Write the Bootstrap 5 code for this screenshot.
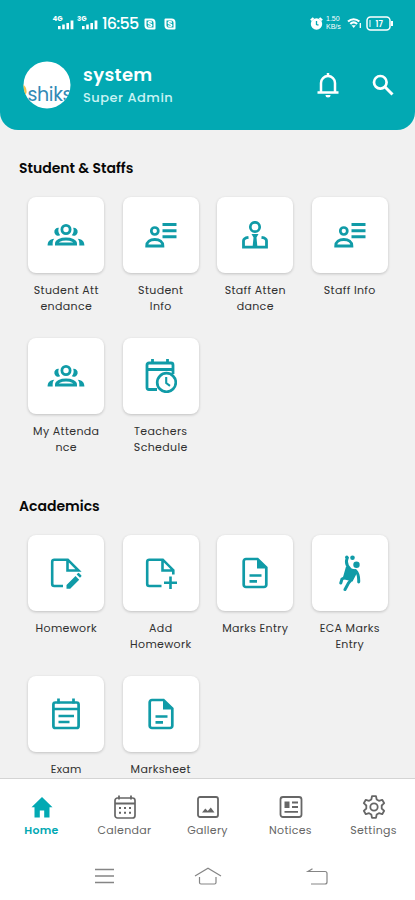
<!DOCTYPE html>
<html lang="en">
<head>
<meta charset="utf-8">
<meta name="viewport" content="width=device-width, initial-scale=1">
<title>School dashboard</title>
<link href="https://cdn.jsdelivr.net/npm/bootstrap@5.3.0/dist/css/bootstrap.min.css" rel="stylesheet">
<style>
:root { --teal: #02a9b3; --icon: #109ba7; }
body { font-family: Poppins, Inter, "Liberation Sans", sans-serif; font-feature-settings: "cv11"; background: #f1f1f1; }
svg { display: block; fill: none; stroke: currentColor; overflow: visible; flex-shrink: 0; }
svg .solid { fill: currentColor; stroke: none; }
.app { width: 415px; height: 900px; }
.app-head { height: 130px; background: var(--teal); border-radius: 0 0 18px 18px; }
.status { height: 46px; padding: 14px 22px 0 53px; }
.clock { font-size: 16px; line-height: 20px; font-weight: 500; letter-spacing: -.75px; margin-left: 3px; width: 38px; }
.status-right { padding-top: 1px; gap: 4px; }
.rate { font-family: "Liberation Sans", sans-serif; font-size: 7px; line-height: 8px; width: 17px; margin-left: -1px; }
.profile { padding: 15px 21px 0 23px; }
.avatar { width: 48px; height: 48px; }
.who { margin-left: 12px; }
.who-name { font-size: 18px; line-height: 24px; font-weight: 600; letter-spacing: .35px; }
.who-role { font-size: 13px; line-height: 20px; font-weight: 500; color: #c9f3f4; letter-spacing: .5px; margin-top: 1px; }
.search { margin-left: 33px; }
.content { padding: 0 18px 0 19px; }
.first-section { padding-top: 28px; }
.next-section { padding-top: 18px; }
.section-title { font-size: 14px; line-height: 20px; font-weight: 600; color: #080808; letter-spacing: 0; }
.tiles { padding: 19px 0 0; }
.tile { height: 140.7px; }
.tile-box { width: 76px; height: 76px; border-radius: 8px; color: var(--icon); box-shadow: 0 1px 3px rgba(0,0,0,.2); }
.tile-label { font-size: 11px; line-height: 16px; margin-top: 9px; color: #303030; letter-spacing: .35px; white-space: nowrap; }
.tabs { height: 74px; border-top: 1px solid #d4d4d4; color: #666; padding-top: 16px; }
.tab-label { font-size: 11px; line-height: 16px; margin-top: 3px; letter-spacing: .3px; }
.tab-on { color: var(--teal); }
.tab-on .tab-label { font-weight: 600; }
.sysbar { height: 48px; color: #858585; padding: 0 87px 0 95px; }
.sys-home { margin-right: 5px; }
</style>
</head>
<body>
<svg width="0" height="0" class="position-absolute">
  <defs>
    <symbol id="group" viewBox="0 0 38 24">
      <circle cx="19" cy="6.500" r="4.100" stroke-width="2.800"/>
      <path d="M9.500 21v-.3c0-2.700 4.200-4.700 9.500-4.700s9.500 2 9.500 4.700v.3z" stroke-width="3"/>
      <path class="solid" d="M11.800 4.800a8 8 0 0 0 1.400 7.500 4 4 0 1 1-1.400-7.500zM26.200 4.800a8 8 0 0 1-1.400 7.500 4 4 0 1 0 1.400-7.500zM7.200 15.800c-1.300 1.500-1.700 3.200-1.500 6.700H.6c0-3.600 1.900-6.300 6.600-6.700zM30.800 15.800c1.300 1.500 1.700 3.200 1.500 6.700h5.100c0-3.600-1.900-6.300-6.600-6.700z"/>
    </symbol>
    <symbol id="info" viewBox="0 0 32 26">
      <circle cx="9.800" cy="9" r="3.500" stroke-width="2.700"/>
      <path d="M1.700 24c0-4.200 3.300-6.500 8.100-6.500s8.100 2.300 8.100 6.500z" stroke-width="2.800"/>
      <path d="M17.500 2.500h14M17.500 8.700h14M17.500 14.800h14" stroke-width="2.900"/>
    </symbol>
    <symbol id="staff" viewBox="0 0 26 28">
      <circle cx="13" cy="6" r="4.700" stroke-width="2.700"/>
      <path d="M6.500 16.300c-3 .4-5 1.600-5 3.500v6.400h23v-6.400c0-1.900-2-3.100-5-3.500" stroke-width="2.800"/>
      <path class="solid" d="M9.500 13h7l-2 3.500.8 8.500h-4.600l.8-8.500z"/>
    </symbol>
    <symbol id="sched" viewBox="0 0 32 34">
      <path d="M12 30.500H4a2 2 0 0 1-2-2V6a2 2 0 0 1 2-2h22a2 2 0 0 1 2 2v9M2 10.500h26M7.500 0v5M22.500 0v5" stroke-width="2.800"/>
      <circle cx="21.500" cy="23.500" r="9.300" stroke-width="2.700"/>
      <path d="M21.200 18v6l3.800 2.800" stroke-width="2.100"/>
    </symbol>
    <symbol id="edit" viewBox="0 0 32 32">
      <path d="M13 29H4.200a2 2 0 0 1-2-2V4.700a2 2 0 0 1 2-2h13.600L28.500 13.500h-11V3" stroke-width="2.600"/>
      <path class="solid" d="m16.500 28 9-9 3.700 3.700-9 9h-3.700zM26.600 17.400l1.200-1.200a1 1 0 0 1 1.400 0l2 2a1 1 0 0 1 0 1.400l-1.200 1.200z"/>
    </symbol>
    <symbol id="add" viewBox="0 0 32 32">
      <path d="M16.500 29H4.200a2 2 0 0 1-2-2V4.700a2 2 0 0 1 2-2h13.600L28.300 13.200v4.300M17.500 3v10.500h10.500M25.500 19.500v12.500M19 25.800h13" stroke-width="2.600"/>
    </symbol>
    <symbol id="doc" viewBox="0 0 26 32">
      <path d="M15.500 2H4a2.300 2.300 0 0 0-2.300 2.300v23.400A2.300 2.300 0 0 0 4 30h18a2.300 2.300 0 0 0 2.300-2.300V10.500zM7.500 18.500h12M7.500 24.300h7.500" stroke-width="2.700"/>
      <path class="solid" d="M15 2v9.500h9.500z"/>
    </symbol>
    <symbol id="exam" viewBox="0 0 28 32">
      <rect x="1.400" y="4.500" width="25.200" height="25.500" rx="2" stroke-width="2.700"/>
      <path d="M1.500 11h25M6.500.5v5M21.500.5v5M6.500 18h15.500M6.500 24h11" stroke-width="2.700"/>
    </symbol>
    <symbol id="sport" viewBox="0 0 22 36">
      <g class="solid"><circle cx="13.500" cy="2.800" r="2.300"/><circle cx="17.500" cy="9.800" r="3.200"/><circle cx="7.800" cy="2.300" r="1.700"/>
      <path d="m7 11.500 4 1.700 6 1.300 1 3.500-4.500 8.500-10-2.500z"/></g>
      <path d="M8.300 3C6.500 7 7.500 10.500 11 14M16.500 15.500c2.700 2.500 3.500 5 3.200 11.500M12.500 24.500l-3 3.500-3.500 6.500M7 22l-4 2-1.200 4" stroke-width="3" stroke-linecap="round" stroke-linejoin="round"/>
    </symbol>
    <symbol id="signal" viewBox="0 0 18 10">
      <path class="solid" d="M0 6.500h2.600V10H0zM4.200 5h2.600v5H4.200zM8.400 3.500H11V10H8.400zM12.600 1h2.800v9h-2.800z"/>
    </symbol>
    <symbol id="skype" viewBox="0 0 12 12">
      <path d="M1.500 1.500h6a3 3 0 0 1 3 3v6h-6a3 3 0 0 1-3-3z" stroke-width="2" stroke-linejoin="round"/>
      <path d="M8 4.300C6.500 3.300 4 3.700 4.300 5c.3 1.200 3.500.7 3.500 2.200 0 1.300-2.400 1.400-3.900.4" stroke-width="1.500"/>
    </symbol>
  </defs>
</svg>

<div class="app d-flex flex-column overflow-hidden">
  <header class="app-head flex-shrink-0 text-white">
    <div class="status d-flex align-items-start">
      <svg width="21" height="16" viewBox="0 0 21 16"><text class="solid" x="-.5" y="7" font-size="7" font-weight="700">4G</text><use href="#signal" x="5" y="5.500" width="18" height="10"/></svg>
      <svg width="21" height="16" viewBox="0 0 21 16" class="ms-1"><text class="solid" x="-1" y="7" font-size="7" font-weight="700">3G</text><use href="#signal" x="4" y="5.500" width="18" height="10"/></svg>
      <span class="clock">16:55</span>
      <svg width="12" height="12" class="ms-1 mt-1"><use href="#skype"/></svg>
      <svg width="12" height="12" class="ms-2 mt-1"><use href="#skype"/></svg>
      <div class="status-right d-flex align-items-center ms-auto">
        <svg width="13" height="13" viewBox="0 0 13 13"><circle cx="6.500" cy="7" r="5.700" class="solid"/><path d="M.8 3.300l2.700-2.300M12.200 3.300L9.500 1" stroke-width="2"/><path d="M6.500 4v3.500l2 .7" stroke="#02a9b3" stroke-width="1.300"/></svg>
        <div class="rate"><div>1.50</div><div>KB/s</div></div>
        <svg width="15" height="12" viewBox="0 0 15 12"><path d="M1 4.500c3.300-3 8-3 11.300 0M3.300 7c2-1.800 4.800-1.800 6.800 0" stroke-width="2.200"/><path class="solid" d="M4.500 8.300h4.400l-2.200 2.700z"/><path d="M13.300 6v5" stroke-width="1.300"/></svg>
        <svg width="27" height="15" viewBox="0 0 27 15"><rect x="1" y="1" width="23" height="13" rx="3.500" stroke-width="1.500"/><path d="M26 5v5" stroke-width="2"/><path d="M4 4v7" stroke-width="1"/><text class="solid" x="9.500" y="10.500" font-size="8" font-weight="600">17</text></svg>
      </div>
    </div>
    <div class="profile d-flex align-items-center">
      <svg class="avatar" viewBox="0 0 48 48"><clipPath id="disc"><circle cx="24" cy="24" r="23.500"/></clipPath><circle cx="24" cy="24" r="23.500" fill="#fff" stroke="none"/><g clip-path="url(#disc)"><path d="M0 23q5 5 3 10l-3 1z" fill="#f3c34e" stroke="none"/><text x="4.500" y="39.500" font-size="19" textLength="45" fill="#3189b5" stroke="none">shiks</text></g></svg>
      <div class="who">
        <div class="who-name">system</div>
        <div class="who-role">Super Admin</div>
      </div>
      <svg width="22" height="26" viewBox="0 0 22 26" class="ms-auto"><path d="M4 20.500V11a7 7 0 0 1 14 0v9.500M.5 20.500h21M11 1v3" stroke-width="2.500"/><path class="solid" d="M8.500 23h5a2.500 2.500 0 0 1-5 0z"/></svg>
      <svg width="22" height="22" viewBox="0 0 22 22" class="search"><circle cx="8.300" cy="8.300" r="6.300" stroke-width="2.700"/><path d="m12.800 12.800 7.700 7.700" stroke-width="3"/></svg>
    </div>
  </header>

  <main class="content flex-grow-1 overflow-hidden">
    <section class="first-section">
      <h2 class="section-title mb-0">Student &amp; Staffs</h2>
      <div class="tiles row row-cols-4 g-0 text-center">
        <div class="tile col"><div class="tile-box bg-white mx-auto d-flex align-items-center justify-content-center"><svg width="38" height="24"><use href="#group"/></svg></div><div class="tile-label">Student Att<br>endance</div></div>
        <div class="tile col"><div class="tile-box bg-white mx-auto d-flex align-items-center justify-content-center"><svg width="32" height="26"><use href="#info"/></svg></div><div class="tile-label">Student<br>Info</div></div>
        <div class="tile col"><div class="tile-box bg-white mx-auto d-flex align-items-center justify-content-center"><svg width="26" height="28"><use href="#staff"/></svg></div><div class="tile-label">Staff Atten<br>dance</div></div>
        <div class="tile col"><div class="tile-box bg-white mx-auto d-flex align-items-center justify-content-center"><svg width="32" height="26"><use href="#info"/></svg></div><div class="tile-label">Staff Info</div></div>
        <div class="tile col"><div class="tile-box bg-white mx-auto d-flex align-items-center justify-content-center"><svg width="38" height="24"><use href="#group"/></svg></div><div class="tile-label">My Attenda<br>nce</div></div>
        <div class="tile col"><div class="tile-box bg-white mx-auto d-flex align-items-center justify-content-center"><svg width="32" height="34"><use href="#sched"/></svg></div><div class="tile-label">Teachers<br>Schedule</div></div>
      </div>
    </section>
    <section class="next-section">
      <h2 class="section-title mb-0">Academics</h2>
      <div class="tiles row row-cols-4 g-0 text-center">
        <div class="tile col"><div class="tile-box bg-white mx-auto d-flex align-items-center justify-content-center"><svg width="32" height="32"><use href="#edit"/></svg></div><div class="tile-label">Homework</div></div>
        <div class="tile col"><div class="tile-box bg-white mx-auto d-flex align-items-center justify-content-center"><svg width="32" height="32"><use href="#add"/></svg></div><div class="tile-label">Add<br>Homework</div></div>
        <div class="tile col"><div class="tile-box bg-white mx-auto d-flex align-items-center justify-content-center"><svg width="26" height="32"><use href="#doc"/></svg></div><div class="tile-label">Marks Entry</div></div>
        <div class="tile col"><div class="tile-box bg-white mx-auto d-flex align-items-center justify-content-center"><svg width="22" height="36"><use href="#sport"/></svg></div><div class="tile-label">ECA Marks<br>Entry</div></div>
        <div class="tile col"><div class="tile-box bg-white mx-auto d-flex align-items-center justify-content-center"><svg width="28" height="32"><use href="#exam"/></svg></div><div class="tile-label">Exam</div></div>
        <div class="tile col"><div class="tile-box bg-white mx-auto d-flex align-items-center justify-content-center"><svg width="26" height="32"><use href="#doc"/></svg></div><div class="tile-label">Marksheet</div></div>
      </div>
    </section>
  </main>

  <nav class="tabs d-flex bg-white flex-shrink-0 text-center">
    <div class="col tab-on d-flex flex-column align-items-center"><svg width="24" height="24" viewBox="0 0 24 24"><path class="solid" d="M12 2 1.500 12.300h3v10.200h5.300V15.500h4.400v7h5.300V12.300h3z"/></svg><div class="tab-label">Home</div></div>
    <div class="col d-flex flex-column align-items-center"><svg width="24" height="24" viewBox="0 0 24 24"><rect x="2" y="3" width="20" height="20" rx="2.500" stroke-width="1.700"/><path d="M2 8.500h20M6 .5v4M18 .5v4" stroke-width="1.800"/><path d="M6 13h12.500M6 17.800h12.500" stroke-width="2" stroke-dasharray="2 3"/></svg><div class="tab-label">Calendar</div></div>
    <div class="col d-flex flex-column align-items-center"><svg width="24" height="24" viewBox="0 0 24 24"><rect x="2" y="2" width="20" height="20" rx="2" stroke-width="1.800"/><path class="solid" d="m6 17.500 3.300-4 2.500 2.500 3-3.500 3.700 5z"/></svg><div class="tab-label">Gallery</div></div>
    <div class="col d-flex flex-column align-items-center"><svg width="24" height="24" viewBox="0 0 24 24"><rect x="1.500" y="2" width="21" height="20" rx="2.500" stroke-width="1.800"/><path class="solid" d="M5.500 6.500h5v6.500h-5z"/><path d="M13 7.500h6M13 12h6M5.500 16.800H19" stroke-width="1.800"/></svg><div class="tab-label">Notices</div></div>
    <div class="col d-flex flex-column align-items-center"><svg width="24" height="24" viewBox="0 0 24 24"><circle cx="12" cy="12" r="3.700" stroke-width="1.800"/><path d="M10 1.200h4l.7 3.300 2.200 1.300 3.300-1 2 3.400L19.700 10.500v3l2.500 2.300-2 3.400-3.300-1-2.200 1.300-.7 3.300h-4l-.7-3.300-2.200-1.300-3.300 1-2-3.400 2.500-2.300v-3L1.800 8.200l2-3.400 3.300 1 2.200-1.300z" stroke-width="1.800" stroke-linejoin="round"/></svg><div class="tab-label">Settings</div></div>
  </nav>
  <footer class="sysbar bg-white flex-shrink-0 d-flex align-items-center justify-content-between">
    <svg width="19" height="16" viewBox="0 0 19 16"><path d="M0 1.500h19M0 8h19M0 14.500h19" stroke-width="1.300"/></svg>
    <svg width="28" height="18" viewBox="0 0 28 18" class="sys-home"><path d="M1 9 14 1.200 27 9M5.500 10v5.500q0 1.500 1.500 1.500h13.500q1.500 0 1.500-1.500V10" stroke-width="1.200"/></svg>
    <svg width="21" height="17" viewBox="0 0 21 17"><path d="M5.500.8 1 3.500h17q2 0 2 2V14q0 2-2 2H4" stroke-width="1.200"/></svg>
  </footer>
</div>
<script src="https://cdn.jsdelivr.net/npm/bootstrap@5.3.0/dist/js/bootstrap.bundle.min.js"></script>
</body>
</html>
